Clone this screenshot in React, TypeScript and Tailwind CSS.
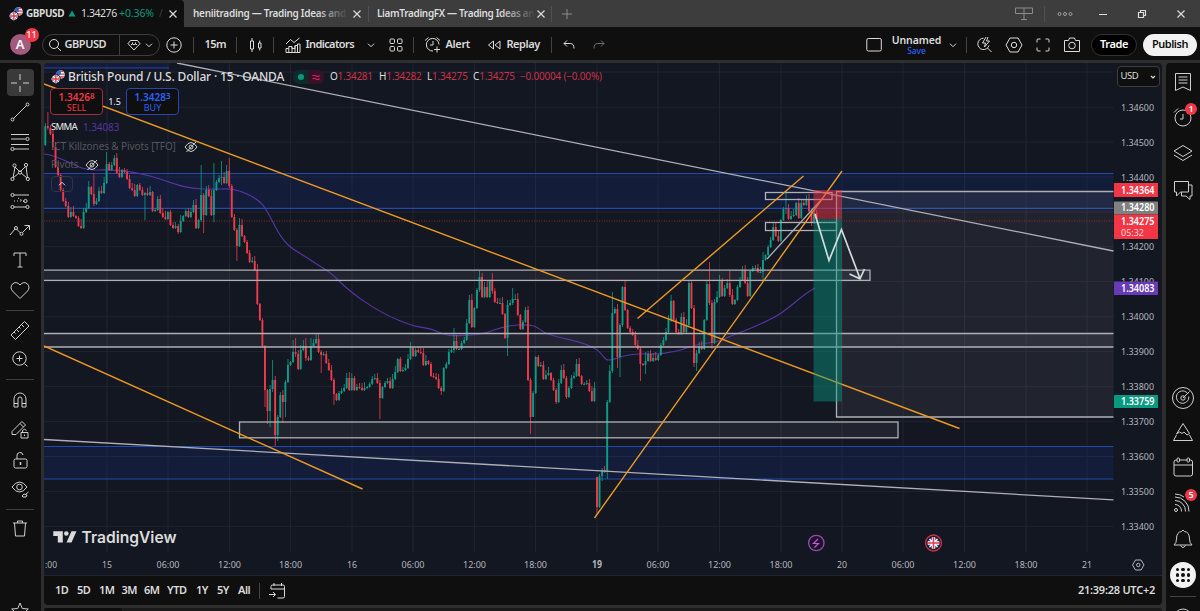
import type { ReactNode } from 'react';

const STEP = 2.554;
const FIRST_X = 45.3;

// close of every 15m bar, in chart pixels
const closes = [
    126, 128, 134, 147, 167, 175, 190, 201, 206, 217, 212, 216, 218, 226, 228, 212, 208, 187, 194, 204, 201, 191, 193, 183,
    164, 170, 165, 158, 173, 177, 170, 172, 179, 188, 190, 196, 185, 190, 195, 193, 195, 192, 211, 210, 199, 213, 217, 219,
    212, 225, 228, 226, 232, 221, 216, 211, 217, 212, 205, 228, 220, 195, 215, 190, 196, 215, 190, 182, 178, 177, 183, 171,
    186, 217, 230, 246, 225, 236, 242, 253, 262, 261, 270, 304, 320, 346, 390, 411, 389, 380, 435, 417, 395, 402, 382, 365,
    362, 352, 354, 369, 350, 346, 358, 360, 346, 343, 339, 352, 355, 354, 363, 370, 380, 394, 400, 393, 391, 388, 378, 390,
    378, 390, 387, 388, 390, 388, 387, 384, 379, 378, 383, 398, 387, 383, 381, 388, 379, 372, 359, 371, 370, 368, 359, 348,
    356, 350, 352, 353, 365, 361, 364, 376, 377, 379, 388, 391, 368, 364, 352, 350, 341, 349, 349, 343, 340, 323, 300, 327,
    308, 290, 277, 297, 287, 297, 281, 291, 302, 303, 303, 314, 338, 305, 303, 299, 299, 315, 329, 322, 310, 380, 417, 393,
    357, 366, 365, 379, 375, 373, 380, 390, 402, 383, 370, 378, 397, 388, 378, 376, 364, 376, 384, 384, 383, 391, 401, 388,
    507, 476, 470, 472, 402, 371, 313, 309, 357, 325, 287, 310, 328, 332, 335, 345, 349, 364, 365, 361, 354, 361, 358, 360,
    355, 345, 340, 332, 320, 301, 320, 332, 334, 317, 332, 325, 283, 308, 363, 353, 347, 349, 320, 284, 303, 343, 302, 297,
    280, 296, 288, 283, 295, 304, 300, 287, 280, 270, 283, 296, 271, 268, 268, 272, 272, 260, 255, 247, 240, 227, 236, 241,
    220, 209, 208, 219, 216, 215, 203, 218, 203, 205, 200, 211, 223, 213, 218,
];

// bars with long wicks: index -> [high, low]
const wicks: Record<number, [number, number]> = {
    0: [123, 146], 1: [112, 130], 14: [219, 229], 19: [173, 206], 24: [152, 184], 27: [155, 166], 39: [192, 220], 52: [224, 234],
    61: [165, 222], 62: [193, 233], 66: [163, 222], 69: [161, 185], 72: [158, 188], 75: [228, 261], 76: [218, 247], 85: [318, 347],
    86: [345, 407], 87: [389, 424], 88: [385, 427], 89: [360, 392], 90: [376, 446], 91: [415, 441], 93: [390, 423], 94: [380, 417],
    97: [340, 363], 98: [338, 357], 102: [338, 361], 104: [338, 361], 108: [350, 373], 113: [378, 405], 120: [373, 391],
    131: [380, 419], 155: [386, 395], 160: [328, 353], 170: [271, 292], 175: [273, 294], 181: [300, 356], 183: [288, 305],
    190: [378, 434], 191: [391, 416], 200: [388, 404], 204: [376, 399], 216: [477, 515], 218: [468, 481], 220: [400, 479],
    222: [292, 373], 224: [304, 368], 225: [323, 377], 226: [286, 327], 233: [347, 381], 235: [352, 374], 245: [295, 322],
    252: [281, 327], 254: [305, 367], 255: [350, 371], 259: [281, 321], 260: [262, 305], 261: [300, 349], 262: [299, 344],
    264: [275, 298], 268: [271, 297], 281: [252, 280], 290: [191, 214], 295: [198, 219], 300: [211, 226],
};

const candles = closes.map((close, i) => {
    const open = i === 0 ? 145 : i === 216 ? 477 : closes[i - 1];
    const top = Math.min(open, close);
    const bottom = Math.max(open, close);
    const [high, low] = wicks[i] ?? [top - 1 - ((i * 7) % 6), bottom + 1 + ((i * 5) % 5)];
    return { x: FIRST_X + i * STEP, top, height: Math.max(1, bottom - top), high, low, color: close <= open ? '#0e9c85' : '#ee3a4b' };
});

const smma =
    'M44 154 C50 154 57 157 66 161 S82 170 95 170 S125 169 150 176 S180 188 203 189 S230 186 247 194 S265 207 276 228 S296 250 312 261 S326 268 338 280 S372 309 398 320 S422 325 436 331 S452 336 472 335 S495 326 518 325 S535 329 548 334 S578 340 592 347 S602 360 609 360 S622 354 640 354 S672 354 690 347 S708 346 724 339 S762 325 778 315 S800 296 815 288';

const gridY = [72, 107.3, 142, 177, 212, 246.7, 281.6, 316.8, 351.7, 386.6, 421.6, 456.5, 491.4, 526.4];
const gridX = [107, 168, 229.5, 290.6, 352, 413, 474.5, 535.5, 597, 658, 719.5, 781, 842, 903, 964.5, 1026, 1087];
const timeLabels = ['15', '06:00', '12:00', '18:00', '16', '06:00', '12:00', '18:00', '19', '06:00', '12:00', '18:00', '20', '06:00', '12:00', '18:00', '21'];
const priceLabels: [string, number][] = [
    ['1.34600', 107.3], ['1.34500', 142], ['1.34400', 177], ['1.34200', 246.7], ['1.34100', 281.6], ['1.34000', 316.8],
    ['1.33900', 351.7], ['1.33800', 386.6], ['1.33700', 421.6], ['1.33600', 456.5], ['1.33500', 491.4], ['1.33400', 526.4],
];
const priceTags = [
    { text: '1.34280', y: 201.5, h: 13, mid: 207.5, fill: '#808080' },
    { text: '1.34364', y: 183, h: 14, mid: 190, fill: '#f23645' },
    { text: '1.34083', y: 281.5, h: 13.5, mid: 288, fill: '#673ab7' },
    { text: '1.33759', y: 395, h: 13, mid: 401.5, fill: '#089981' },
];

function Icon({ size = 22, className = '', children }: { size?: number; className?: string; children: ReactNode }) {
    return (
        <svg width={size} height={size} viewBox={`0 0 ${size} ${size}`} fill="none" stroke="currentColor" strokeWidth="1" className={`shrink-0 ${className}`}>
            {children}
        </svg>
    );
}

function Flags({ size = 15 }: { size?: number }) {
    return (
        <svg width={size} height={size} viewBox="0 0 15 15" className="shrink-0">
            <clipPath id="us"><circle cx="10.2" cy="4.8" r="4.6" /></clipPath>
            <g clipPath="url(#us)">
                <rect x="5" width="10" height="10" fill="#f3f3f5" />
                <path d="M5 1.5h10M5 4.5h10M5 7.5h10" stroke="#e0474f" strokeWidth="1.4" />
                <rect x="5" width="5.5" height="5" fill="#2a66c8" />
            </g>
            <circle cx="5.2" cy="9.6" r="5.2" fill="#0f0f0f" />
            <clipPath id="gb"><circle cx="5.2" cy="9.6" r="4.6" /></clipPath>
            <g clipPath="url(#gb)">
                <rect y="5" width="10" height="10" fill="#2b50a8" />
                <path d="M0 4.5l10.4 10.2M10.4 4.5L0 14.7" stroke="#fff" strokeWidth="1.2" />
                <path d="M5.2 4v11M0 9.6h11" stroke="#fff" strokeWidth="3" />
                <path d="M5.2 4v11M0 9.6h11" stroke="#e23843" strokeWidth="1.5" />
            </g>
        </svg>
    );
}

function Cross({ className = '' }: { className?: string }) {
    return <Icon size={10} className={className}><path d="M1.5 1.5l7 7M8.5 1.5l-7 7" strokeWidth="1.2" /></Icon>;
}

function Chevron({ className = '' }: { className?: string }) {
    return <Icon size={8} className={className}><path d="M1 2.7l3 3 3-3" /></Icon>;
}

function Sep({ className = '' }: { className?: string }) {
    return <div className={`h-4 w-px shrink-0 bg-[#434343] ${className}`} />;
}

function TabBar() {
    return (
        <div className="flex h-[27px] shrink-0 items-center bg-[#3d3d3d] text-[10px] text-[#dbdbdb]">
            <div className="flex h-full w-[184px] shrink-0 items-center rounded-tr bg-[#0f0f0f] pl-[9px]">
                <Flags size={14} />
                <b className="ml-[3px] w-[42px] font-bold tracking-[-0.4px]">GBPUSD</b>
                <svg width="8" height="7" viewBox="0 0 8 7" className="mr-[5px] shrink-0"><path d="M4 .5L7.500 6.500h-7z" fill="#089981" /></svg>
                <span className="w-[38px] text-[10.5px] tracking-[-0.45px]">1.34276</span>
                <span className="w-[40px] text-[10.5px] tracking-[-0.1px] text-[#089981]">+0.36%</span>
                <span className="w-[9px] text-[#3f3f3f]">/</span>
                <Cross />
            </div>
            <div className="relative ml-[9px] w-[159px] font-semibold whitespace-nowrap tracking-[-0.3px]">
                heniitrading — Trading Ideas and
                <div className="absolute inset-y-0 right-1 w-8 bg-linear-to-r from-transparent to-[#3d3d3d]" />
            </div>
            <Cross />
            <Sep className="ml-[6px] bg-[#505050]" />
            <div className="relative ml-[8px] w-[159px] font-semibold whitespace-nowrap tracking-[-0.35px]">
                LiamTradingFX — Trading Ideas an
                <div className="absolute inset-y-0 right-0 w-9 bg-linear-to-r from-transparent to-[#3d3d3d]" />
            </div>
            <Cross />
            <Sep className="ml-[5px] bg-[#505050]" />
            <Icon size={12} className="ml-[9px] text-[#8c8c8c]"><path d="M6 1v10M1 6h10" /></Icon>
            <Icon size={20} className="ml-auto text-[#8c8c8c]"><path d="M1.5 4h17v5.500h-17zM10 4v11.500M7 15.500h6" /></Icon>
            <Sep className="ml-[10px] bg-[#505050]" />
            <Icon size={16} className="ml-[12px] text-[#a0a0a0]">
                <circle cx="2.5" cy="8" r="1.500" /><circle cx="8" cy="8" r="1.500" /><circle cx="13.500" cy="8" r="1.500" />
            </Icon>
            <Icon size={10} className="ml-[25px]"><path d="M1 5.500h8" /></Icon>
            <Icon size={10} className="ml-[29px]"><path d="M1.500 3.500h5v5h-5zM3.500 3V1.500h5v5H7" strokeWidth="1.200" /></Icon>
            <Cross className="ml-[29px] mr-[14px]" />
        </div>
    );
}

function TopToolbar() {
    return (
        <div className="flex h-[33px] shrink-0 items-center bg-[#0f0f0f] pt-[2px] text-[11px] font-semibold text-[#dbdbdb]">
            <div className="relative ml-[9.5px] flex size-[21px] shrink-0 items-center justify-center rounded-full bg-[#a35a7c] text-[13px] text-white">
                A
                <span className="absolute -top-[6px] left-[15px] flex size-[14px] items-center justify-center rounded-full bg-[#f23645] text-[9px] font-medium">11</span>
            </div>
            <div className="ml-[11px] flex h-[22px] w-[118px] shrink-0 items-center rounded-full border border-[#3d3d3d]">
                <Icon size={14} className="ml-[5px]"><circle cx="6" cy="6" r="4.500" /><path d="M9.300 9.300l3.700 3.700" /></Icon>
                <span className="ml-[3px] w-[54px] tracking-[-0.45px]">GBPUSD</span>
                <div className="h-full w-px bg-[#3d3d3d]" />
                <Icon size={14} className="ml-[7px]">
                    <path d="M3.500 2.500h7l2.500 3.200L7 12 1 5.700zM4 7l1.500-1.500L7 7l1.500-1.500L10 7" />
                    <path d="M5.500 4.500v2M8.500 4.500v2" />
                </Icon>
                <Chevron className="ml-[4px]" />
            </div>
            <Icon size={16} className="ml-[6px]"><circle cx="8" cy="8" r="7.200" /><path d="M8 4.500v7M4.500 8h7" /></Icon>
            <Sep className="ml-[11px]" />
            <span className="ml-[11px] w-[31px] tracking-[-0.5px]">15m</span>
            <Sep />
            <Icon size={14} className="ml-[12px]"><path d="M1.500 3h3v8h-3zM3 0v3M3 11v3M9.500 5h2.500v5h-2.500zM10.700 2.500V5M10.700 10v2.500" /></Icon>
            <Sep className="ml-[10px]" />
            <Icon size={16} className="ml-[11px]"><path d="M1 15.500v-4h2.800v-2h3.200v2h3v-3h2.500v-1.500h2.500v8.500zM3.800 11.500v4M7 10v5.500M10 9v6.500M12.500 8v7.500M1 7l4.500-4.500 3.500 3L14.500 1" /></Icon>
            <span className="ml-[5px] w-[61px] tracking-[-0.6px]">Indicators</span>
            <Chevron />
            <Icon size={14} className="ml-[14px]"><rect x="1" y="1" width="4.500" height="4.500" rx="1" /><rect x="8.500" y="1" width="4.500" height="4.500" rx="1" /><rect x="1" y="8.500" width="4.500" height="4.500" rx="1" /><rect x="8.500" y="8.500" width="4.500" height="4.500" rx="1" /></Icon>
            <Sep className="ml-[10px]" />
            <Icon size={18} className="ml-[10px]"><path d="M15 8.500A6.300 6.300 0 1 0 9 15M1 4.500L4.500 1.500M12.500 1.500L16 4.500M9 5v4H6M13 10.500v6M10 13.500h6" /></Icon>
            <span className="ml-[4px] w-[40px] tracking-[-0.35px]">Alert</span>
            <Icon size={14} className="ml-[1px]"><path d="M6.500 3v8L1.500 7zM13 3v8L8 7z" /></Icon>
            <span className="ml-[6px] w-[44px] tracking-[-0.45px]">Replay</span>
            <Sep />
            <Icon size={12} className="ml-[11px]"><path d="M4 1.500L1 4.500l3 3M1 4.500h6.500q3.500 0 3.500 5" /></Icon>
            <Icon size={12} className="ml-[18px] text-[#707070]"><path d="M8 1.500l3 3-3 3M11 4.500H4.500Q1 4.500 1 9.500" /></Icon>
            <Icon size={16} className="ml-auto"><rect x=".8" y="1.500" width="14.500" height="12.500" rx="1.500" /></Icon>
            <div className="ml-[11px] flex w-[47px] flex-col items-center text-[10.5px] leading-[11px] tracking-[-0.1px]">
                <div>Unnamed</div>
                <div className="text-[8.5px] leading-[9px] font-medium text-[#2962ff]">Save</div>
            </div>
            <Chevron className="ml-[9px]" />
            <Sep className="ml-[9px]" />
            <Icon size={18} className="ml-[9px]"><path d="M7.500 2.200A5.700 5.700 0 1 0 13 9.500M11.500 12l4 4M10 1L6.500 7h3L8.500 11l5-6H10.500L12 1" /></Icon>
            <Icon size={18} className="ml-[11px]"><path d="M5 2h8l4 7-4 7H5L1 9z" /><circle cx="9" cy="9" r="2.700" /></Icon>
            <Icon size={14} className="ml-[13px]"><path d="M1 4.500V2q0-1 1-1h2.500M9.500 1H12q1 0 1 1v2.500M13 9.500V12q0 1-1 1H9.500M4.500 13H2q-1 0-1-1V9.500" /></Icon>
            <Icon size={18} className="ml-[13px]"><path d="M1.500 4.500h4L6.500 2h5l1 2.500h4v11h-15z" /><circle cx="9" cy="9.500" r="3.300" /></Icon>
            <div className="ml-[10px] flex h-[22px] w-[46px] items-center justify-center rounded-full border border-[#333] bg-black tracking-[-0.4px] text-white">Trade</div>
            <div className="mr-[3px] ml-[6px] flex h-[22px] w-[54px] items-center justify-center rounded-full bg-[#f2f2f2] tracking-[-0.5px] text-[#0f0f0f]">Publish</div>
        </div>
    );
}

const drawTools: { h: string; icon: ReactNode }[] = [
    { h: 'h-[30px]', icon: <path d="M2 11h6M14 11h6M11 2v6M11 14v6" /> },
    { h: 'h-[30px]', icon: <><path d="M4.300 17.700L17.500 4.500" /><circle cx="3.500" cy="18.500" r="1.500" /><circle cx="18.500" cy="3.500" r="1.500" /></> },
    { h: 'h-[30px]', icon: <><path d="M2 3.500h18M2 8h14.500M2 13.500h18M5 18h15" /><circle cx="18.500" cy="8" r="1.600" /><circle cx="3.500" cy="18" r="1.600" /></> },
    { h: 'h-[29px]', icon: <><path d="M4 17L6 6M6 6l5 5M11 11l6-6M17 5l1.500 12M4 17l6-5M12 12l6 5" /><circle cx="3.500" cy="18" r="1.600" /><circle cx="5.500" cy="4.500" r="1.600" /><circle cx="11" cy="11.500" r="1.600" /><circle cx="17" cy="4" r="1.600" /><circle cx="18.800" cy="18" r="1.600" /></> },
    { h: 'h-[30px]', icon: <><path d="M5 5h15M5 17h12M5 11h1M8 11h1M11 11h1M14 11h1" /><path d="M9 8l8 5" strokeDasharray="1.500 1.500" /><circle cx="3.500" cy="5" r="1.600" /><circle cx="16.500" cy="11" r="1.600" /><circle cx="3.500" cy="17" r="1.600" /><circle cx="18.500" cy="17" r="1.600" /></> },
    { h: 'h-[29px]', icon: <><path d="M1 15l5-6M7.500 9l4 4M13.500 12.500L20 6M15.500 5.500H20.500v4.500" /><circle cx="7" cy="8" r="1.500" /><circle cx="12.500" cy="13.800" r="1.500" /></> },
    { h: 'h-[30px]', icon: <path d="M5 7V4h12v3M11 4v14M8.500 18h5" /> },
    { h: 'h-[40px]', icon: <path d="M11 19.500L3.500 12a5 5 0 0 1 0-7q3.700-3.300 7.500 1 3.800-4.300 7.500-1a5 5 0 0 1 0 7z" /> },
    { h: 'h-[29px]', icon: <path d="M2 16L15.500 2.500 20 7 6.500 20.500zM5 13l1.500 1.500M7.500 10.500l2.500 2.500M10 8l1.500 1.500M12.500 5.500L15 8" /> },
    { h: 'h-[41px]', icon: <><circle cx="10.500" cy="10.500" r="6.700" /><path d="M15.500 15.500l3 3M10.500 7.500v6M7.500 10.500h6" /></> },
    { h: 'h-[30px]', icon: <path d="M5 18v-8a6 6 0 0 1 12 0v8h-4v-8a2 2 0 0 0-4 0v8zM5 14.500h4M13 14.500h4" /> },
    { h: 'h-[31px]', icon: <path d="M3 12.500L13 2.500l3.500 3.500L7 15.500H3zM11 4.500L14.500 8M12 13.500h7v5.500h-7zM13.500 13.500v-2q2-2.500 4 0M15.500 15.500v1.500" /> },
    { h: 'h-[28px]', icon: <><rect x="5" y="9" width="13" height="9" rx="1.500" /><path d="M8 9V6a3 3 0 0 1 6-1" /><path d="M11.500 12v3" strokeWidth="1.500" /></> },
    { h: 'h-[40px]', icon: <><path d="M3 9q3.500-5 7.500-5T18 9q-3.500 5-7.500 5T3 9z" /><circle cx="10.500" cy="9" r="2.800" /><path d="M13 18l2-2 3 1-1 2h-3zM17 16l2.500-2" /></> },
    { h: 'h-[28px]', icon: <path d="M4 5h14M8.500 5V3h5v2M5.500 5l1 13h9l1-13" /> },
];

function LeftToolbar() {
    return (
        <div className="relative flex w-[41px] shrink-0 flex-col items-center overflow-hidden rounded-tr bg-[#0f0f0f] pt-[4px] pr-px text-[#cfcfcf]">
            {drawTools.map((tool, i) => (
                <div key={i} className={`flex w-full shrink-0 flex-col items-center ${tool.h}`}>
                    <div className={`flex w-[27px] shrink-0 items-center justify-center ${i === 0 ? 'mt-[2px] h-[27px] rounded bg-[#3a3a3a]' : 'h-[30px]'}`}>
                        <Icon>{tool.icon}</Icon>
                    </div>
                    {(i === 7 || i === 9 || i === 13) && <div className="mt-[5px] h-px w-[28px] shrink-0 bg-[#3f3f3f]" />}
                </div>
            ))}
            <Icon size={18} className="absolute bottom-[-9px]"><path d="M9 1l2.300 5.500 6 .5-4.500 4 1.500 6L9 14l-5.300 3 1.500-6L.7 7l6-.5z" /></Icon>
        </div>
    );
}

function Badge({ children }: { children: ReactNode }) {
    return <span className="absolute -top-[3px] left-[13px] flex size-[12px] items-center justify-center rounded-full bg-[#f23645] text-[9px] font-semibold text-white">{children}</span>;
}

function RightToolbar() {
    return (
        <div className="flex w-[34px] shrink-0 flex-col items-center overflow-hidden rounded-tl bg-[#0f0f0f] text-[#cfcfcf]">
            <Icon className="mt-[8px]"><path d="M3.500 2.500h15v17L11 16l-7.500 3.500zM6.500 6h9M6.500 9h9M6.500 12h9" /></Icon>
            <div className="relative mt-[13px]">
                <Icon><circle cx="11" cy="12" r="8" /><path d="M11 8v5H8M2 6.500L6 2.500M16 2.500l4 4" /></Icon>
                <Badge>1</Badge>
            </div>
            <Icon className="mt-[14px]"><path d="M11 3.500L20 9l-9 5.500L2 9zM2 13l9 5.500L20 13" /></Icon>
            <Icon className="mt-[15px]"><path d="M2.500 2.500h14v10.500h-8l-4 4v-4h-2zM16.500 6h3.500v11h-2v3.500L14 17H9.500v-4" /></Icon>
            <Icon size={24} className="mt-[185px]"><circle cx="12" cy="12" r="10.500" /><path d="M17 8a6.200 6.200 0 1 0 .8 2.500M12 12l6.500-6.500" /><circle cx="12" cy="12" r="2.200" /></Icon>
            <Icon className="mt-[11px]"><path d="M1.500 19.500h19L17.500 14M4.500 14l-3 5.500M4.500 13L11 2.500 17.500 12.500 15 14l-3-3-2 1.500L7.500 11z" /></Icon>
            <Icon className="mt-[13px]"><rect x="2" y="4" width="18.500" height="16" rx="2" /><path d="M2 9h18.500" /><rect x="5" y="2" width="2.500" height="4" rx="1" fill="#0f0f0f" /><rect x="15" y="2" width="2.500" height="4" rx="1" fill="#0f0f0f" /></Icon>
            <div className="relative mt-[14px]">
                <Icon><circle cx="4" cy="18" r="1.500" /><path d="M3 12.500a6.500 6.500 0 0 1 6.500 7M3 8.500a10.500 10.500 0 0 1 10.500 11M3 5a14 14 0 0 1 14 14.500M3 2q5 0 9 3" /></Icon>
                <Badge>5</Badge>
            </div>
            <Icon className="mt-[14px]"><path d="M2 17q2.500-2 2.500-6 0-7 5-7.500L11 2l1.500 1.500q5 .5 5 7.500 0 4 2.500 6zM8.500 17.500q2.500 4 5 0" /></Icon>
            <div className="mt-[12px] grid size-[26px] shrink-0 grid-cols-[repeat(3,3.5px)] place-content-center gap-[1.8px] rounded-full bg-[#f2f2f2]">
                {Array.from({ length: 9 }, (_, i) => <div key={i} className="size-[3.5px] rounded-full bg-[#0f0f0f]" />)}
            </div>
            <div className="mt-[8px] h-px w-[26px] shrink-0 bg-[#434343]" />
            <Icon className="mt-[10px]"><circle cx="11" cy="11" r="9" /></Icon>
        </div>
    );
}

function Chart() {
    return (
        <svg width="1118" height="512" viewBox="44 63 1118 512" className="block font-['Noto_Sans',sans-serif]">
            <rect x="44" y="63" width="1118" height="512" fill="#131722" />
            <g stroke="#1f2430" strokeWidth="1">
                {gridY.map((y) => <path key={y} d={`M44 ${y}H1113.500`} />)}
                {gridX.map((x) => <path key={x} d={`M${x} 63V552`} />)}
            </g>

            <g fill="#1540d0" fillOpacity=".13">
                <rect x="44" y="63" width="125" height="5" />
                <rect x="44" y="173.500" width="1069.500" height="35" />
                <rect x="44" y="446.500" width="1069.500" height="32.500" />
            </g>
            <g stroke="#2349ad" strokeWidth="1.200">
                <path d="M44 68H169M44 173.500H1113.500M44 208.300H1113.500M44 446.500H1113.500M44 479H1113.500" />
            </g>

            <g fill="#b2b5be" fillOpacity=".09" stroke="none">
                <rect x="44" y="270" width="826" height="10.500" />
                <rect x="44" y="333.500" width="1069.500" height="13.500" />
                <rect x="239.500" y="422" width="658.500" height="15.800" />
                <rect x="836.500" y="191.500" width="277" height="225.500" />
            </g>
            <path d="M44 221H1113.500" stroke="#8e2836" strokeDasharray="1 1.500" />

            <path d={smma} fill="none" stroke="#5535a0" strokeWidth="1.200" />
            {candles.map((c, i) => (
                <g key={i} fill={c.color}>
                    <rect x={c.x - 0.35} y={c.high} width="0.8" height={c.low - c.high} />
                    <rect x={c.x - 0.95} y={c.top} width="1.900" height={c.height} />
                </g>
            ))}

            <g fill="none" stroke="#aeb0b6" strokeWidth="1.300">
                <path d="M44 270.200H870V280.400H44M44 333.500H1113.500M44 347H1113.500" />
                <rect x="239.500" y="422" width="658.500" height="15.800" />
                <path d="M1113.500 191.500H836.500V417H1113.500" />
                <rect x="765.500" y="192.500" width="66.500" height="7" />
                <rect x="765.500" y="222.500" width="71" height="8" />
                <path d="M177 63L1113.500 251M44 439.500L1113.500 499.800" />
                <path d="M767 259L822 199" />
            </g>
            <g stroke="#ee9a20" strokeWidth="1.400">
                <path d="M44 84L959.500 428.500M44 346L362.500 489M594.500 518L842 171M637.500 318.500L803.500 176" />
            </g>

            <rect x="813.500" y="190" width="28.500" height="29" fill="#f23645" fillOpacity=".5" />
            <rect x="813.500" y="219" width="28.500" height="182.500" fill="#089981" fillOpacity=".45" />
            <path d="M815 214L829 260.500L841.500 229.500L860 278.500M849.500 274L860 278.800L864.500 269" fill="none" stroke="#d3dade" strokeWidth="1.700" />

            <g>
                <circle cx="816.300" cy="543" r="7.700" fill="#22102e" stroke="#8e4fa8" strokeWidth="1.300" />
                <path d="M818 539l-4.500 4.500h5L814.500 547.500" fill="none" stroke="#b45fd0" strokeWidth="1.200" />
                <circle cx="933.500" cy="543" r="8" fill="#1b1d2d" stroke="#cf3443" strokeWidth="1.300" />
                <circle cx="933.500" cy="543" r="5.800" fill="#2b50a8" />
                <path d="M929.500 539l8 8M937.500 539l-8 8" stroke="#fff" strokeWidth="1.300" />
                <path d="M933.500 537.200v11.600M927.700 543h11.600" stroke="#fff" strokeWidth="3.400" />
                <path d="M933.500 537.200v11.600M927.700 543h11.600" stroke="#e23843" strokeWidth="1.600" />
            </g>

            <g fill="#dbdbdb">
                <path d="M53.300 531.200h9.500v11.400h-5v-6.700h-4.500zM71.500 531.200h5l-5 11.400h-5z" />
                <circle cx="66.300" cy="533.500" r="2.300" />
                <text x="81.500" y="542.500" fontFamily="Inter" fontSize="16" fontWeight="600" textLength="95" lengthAdjust="spacingAndGlyphs">TradingView</text>
            </g>

            <g fontSize="9.800" fill="#b4b6bd">
                {priceLabels.map(([text, y]) => <text key={text} x="1121" y={y + 3.500} textLength="33" lengthAdjust="spacingAndGlyphs">{text}</text>)}
                <text x="45" y="568" textLength="12" lengthAdjust="spacingAndGlyphs">:00</text>
                {timeLabels.map((text, i) => (
                    <text key={i} x={gridX[i]} y="568" textAnchor="middle" fontWeight={text === '19' ? 700 : 400} textLength={text.length > 2 ? 23 : 10} lengthAdjust="spacingAndGlyphs">{text}</text>
                ))}
            </g>
            {priceTags.map((tag) => (
                <g key={tag.text}>
                    <rect x="1114" y={tag.y} width="44" height={tag.h} rx=".5" fill={tag.fill} />
                    <text x="1121" y={tag.mid + 3.500} fontSize="9.800" fontWeight="600" fill="#fff" textLength="33.500" lengthAdjust="spacingAndGlyphs">{tag.text}</text>
                </g>
            ))}
            <rect x="1114" y="214.500" width="44" height="24.500" rx=".5" fill="#f23645" />
            <text x="1121" y="225" fontSize="9.800" fontWeight="600" fill="#fff" textLength="33.500" lengthAdjust="spacingAndGlyphs">1.34275</text>
            <text x="1121" y="236" fontSize="9.800" fill="#ffd0d4" textLength="23" lengthAdjust="spacingAndGlyphs">05:32</text>
            <g fill="none" stroke="#b4b6bd">
                <path d="M1135.500 560h5.500l3 5-3 5h-5.500l-3-5z" /><circle cx="1138.300" cy="565" r="1.700" />
            </g>
        </svg>
    );
}

function HiddenEye() {
    return (
        <Icon size={14} className="text-[#d0d0d0]"><path d="M1 7q3-4.500 6-4.500T13 7q-3 4.500-6 4.500T1 7zM2.500 12L12 2" /><circle cx="7" cy="7" r="2" /></Icon>
    );
}

function Legend() {
    return (
        <div className="absolute top-0 left-[7px] flex flex-col text-[10px] text-[#dbdbdb]">
            <div className="mt-[5px] flex h-[17px] items-center whitespace-nowrap">
                <Flags size={14} />
                <span className="ml-[3px] w-[225px] text-[12px] font-medium tracking-[-0.18px]">British Pound / U.S. Dollar · 15 · OANDA</span>
                <div className="flex h-[14px] w-[31px] items-center overflow-hidden rounded-md text-[12px]">
                    <div className="flex h-full w-[15px] items-center justify-center bg-[#0c2b2b]"><div className="size-[6px] rounded-full bg-[#089981]" /></div>
                    <div className="flex h-full w-[16px] items-center justify-center bg-[#351226] text-[#d81b60]">
                        <Icon size={10}><path d="M1.500 4q1.700-1.500 3.500 0t3.500-.5M1.500 7q1.700-1.500 3.500 0t3.500-.5" strokeWidth="1.200" /></Icon>
                    </div>
                </div>
                <span className="ml-[6px] w-[49px] tracking-[-0.25px]">O<span className="text-[#c93145]">1.34281</span></span>
                <span className="w-[48px] tracking-[-0.25px]">H<span className="text-[#c93145]">1.34282</span></span>
                <span className="w-[46px] tracking-[-0.2px]">L<span className="text-[#c93145]">1.34275</span></span>
                <span className="w-[47px] tracking-[-0.2px]">C<span className="text-[#c93145]">1.34275</span></span>
                <span className="tracking-[-0.2px] text-[#c93145]">−0.00004 (−0.00%)</span>
            </div>
            <div className="mt-[3px] flex items-center">
                <div className="-ml-[1px] flex h-[27px] w-[53px] flex-col items-center rounded border border-[#a52c3a] bg-[#0f0f0f] pt-[2px] text-[#f23645]">
                    <div className="flex h-[12px] text-[10px] leading-[12px] font-semibold">1.3426<span className="text-[8px] leading-[9px]">8</span></div>
                    <div className="h-[11px] text-[9px] leading-[10px]">SELL</div>
                </div>
                <span className="w-[23px] text-center text-[9px] font-medium">1.5</span>
                <div className="flex h-[27px] w-[53px] flex-col items-center rounded border border-[#2349ad] bg-[#0f0f0f] pt-[2px] text-[#2962ff]">
                    <div className="flex h-[12px] text-[10px] leading-[12px] font-semibold">1.3428<span className="text-[8px] leading-[9px]">3</span></div>
                    <div className="h-[11px] text-[9px] leading-[10px]">BUY</div>
                </div>
            </div>
            <div className="mt-[4px] flex h-[17px] items-center">
                <span className="w-[32px] text-[9.5px] font-medium tracking-[-0.75px]">SMMA</span>
                <span className="tracking-[-0.1px] text-[#5535a0]">1.34083</span>
            </div>
            <div className="mt-[2px] flex h-[17px] items-center whitespace-nowrap text-[#53565e]">
                <span className="w-[133px] tracking-[-0.1px]">ICT Killzones &amp; Pivots [TFO]</span>
                <HiddenEye />
            </div>
            <div className="mt-px flex h-[17px] items-center text-[#53565e]">
                <span className="w-[34px] tracking-[-0.1px]">Pivots</span>
                <HiddenEye />
            </div>
            <div className="mt-[3px] flex h-[16px] w-[22px] items-center justify-center rounded-sm border border-[#34363e]">
                <Chevron className="rotate-180" />
            </div>
        </div>
    );
}

function BottomToolbar() {
    return (
        <div className="flex h-[30px] shrink-0 items-center rounded-b border-t border-[#24262c] bg-[#0f0f0f] pl-[11px] text-[11px] font-semibold tracking-[-0.5px] text-[#dbdbdb]">
            <span className="w-[22px]">1D</span>
            <span className="w-[22px]">5D</span>
            <span className="w-[22.5px]">1M</span>
            <span className="w-[22.5px]">3M</span>
            <span className="w-[23px]">6M</span>
            <span className="w-[29px]">YTD</span>
            <span className="w-[21px]">1Y</span>
            <span className="w-[21px]">5Y</span>
            <span className="w-[21px]">All</span>
            <Sep />
            <Icon size={18} className="ml-[8px]"><path d="M3 7V4.500q0-1.500 1.500-1.500h10.500q1.500 0 1.500 1.500v10q0 1.500-1.500 1.500h-5.500M3 7h13.500M6 1v3M13.500 1v3M1 12.500h6.500M5 10l2.500 2.500L5 15" /></Icon>
            <span className="mr-[7px] ml-auto tracking-[-0.25px]">21:39:28 UTC+2</span>
        </div>
    );
}

export default function App() {
    return (
        <div className="flex h-[611px] w-[1200px] flex-col overflow-hidden bg-[#2e2e2e] font-['Noto_Sans',sans-serif]">
            <TabBar />
            <TopToolbar />
            <div className="mt-[3px] flex min-h-0 flex-1">
                <LeftToolbar />
                <div className="ml-[3px] flex w-[1118px] shrink-0 flex-col">
                    <div className="relative h-[512px] shrink-0 overflow-hidden rounded-t">
                        <Chart />
                        <Legend />
                        <div className="absolute top-[3px] left-[1072.5px] flex h-[21px] w-[43px] items-center justify-between rounded border border-[#3d3d3d] bg-[#0f0f0f] pr-[3px] pl-[3px] text-[9.5px] tracking-[-0.5px] text-[#dbdbdb]">
                            USD
                            <Icon size={6}><path d="M1 2l2 2 2-2" strokeWidth="1.200" /></Icon>
                        </div>
                    </div>
                    <BottomToolbar />
                    <div className="mt-[3px] flex-1 rounded-t bg-[#1a1a1a]">
                        <div className="h-full w-[78px] rounded-t bg-[#0c0c0c]" />
                    </div>
                </div>
                <div className="ml-auto flex"><RightToolbar /></div>
            </div>
        </div>
    );
}
